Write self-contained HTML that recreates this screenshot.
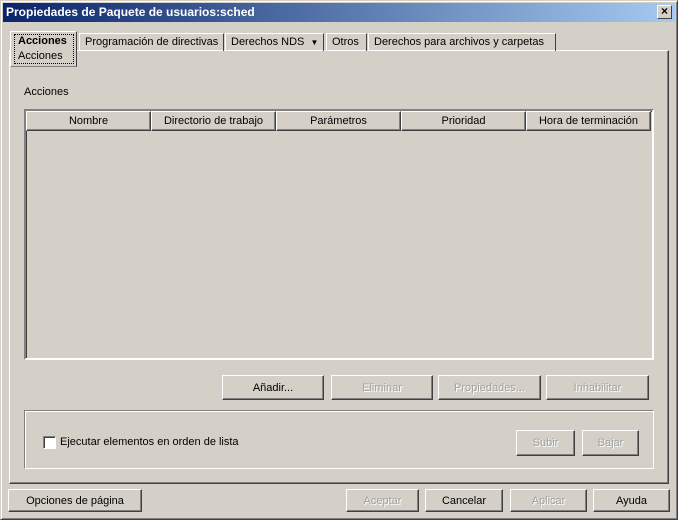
<!DOCTYPE html>
<html><head><meta charset="utf-8"><style>
*{margin:0;padding:0;box-sizing:border-box}
body{width:678px;height:520px;background:#d4d0c8;font-family:"Liberation Sans",sans-serif;font-size:11px;color:#000;position:relative;overflow:hidden}
.a{position:absolute}
.win{left:0;top:0;width:678px;height:520px;border:1px solid;border-color:#d4d0c8 #404040 #404040 #d4d0c8;box-shadow:inset 1px 1px #fff,inset -1px -1px #808080}
.title{left:3px;top:3px;width:672px;height:19px;background:linear-gradient(90deg,#0a246a,#a6caf0);color:#fff;font-weight:bold;font-size:12px;padding:2px 0 0 3px}
.close{left:657px;top:5px;width:15px;height:14px;background:#d4d0c8;border:1px solid;border-color:#fff #404040 #404040 #fff;font-size:12px;font-weight:bold;line-height:11px;text-align:center;color:#000}
.btn{position:absolute;border:1px solid;border-color:#fff #404040 #404040 #fff;box-shadow:inset -1px -1px #808080;text-align:center;display:flex;align-items:center;justify-content:center}
.dis{color:#a0a0a0;text-shadow:1px 1px #fff}
.tab{position:absolute;top:33px;height:18px;border:1px solid;border-color:#fff #404040 transparent #fff;border-bottom:none;padding:2px 0 0 5px}
.panel{left:9px;top:50px;width:660px;height:434px;border:1px solid;border-color:#fff #404040 #404040 #fff;box-shadow:inset -1px -1px #808080}
.hd{position:absolute;top:111px;height:20px;border:1px solid;border-color:#fff #404040 #404040 #fff;box-shadow:inset -1px -1px #808080;text-align:center;padding-top:3px}
</style></head><body>
<div class="a win"></div>
<div class="a title">Propiedades de Paquete de usuarios:sched</div>
<div class="a close">×</div>
<div class="a panel"></div>
<div class="tab" style="left:79px;width:145px">Programación de directivas</div>
<div class="tab" style="left:225px;width:99px">Derechos NDS &nbsp;<span style="font-size:8px">▼</span></div>
<div class="tab" style="left:326px;width:41px">Otros</div>
<div class="tab" style="left:368px;width:188px">Derechos para archivos y carpetas</div>
<div class="a" style="left:10px;top:31px;width:67px;height:36px;background:#d4d0c8;border:1px solid;border-color:#fff #404040 #808080 #fff"></div>
<div class="a" style="left:14px;top:34px;width:60px;height:30px;border:1px dotted #000"></div>
<div class="a" style="left:18px;top:35px;font-weight:bold">Acciones</div>
<div class="a" style="left:18px;top:50px">Acciones</div>
<div class="a" style="left:24px;top:86px">Acciones</div>
<div class="a" style="left:24px;top:109px;width:630px;height:251px;border:2px solid;border-color:#808080 #fff #fff #808080;box-shadow:inset 1px 1px #404040"></div>
<div class="hd" style="left:26px;width:125px">Nombre</div>
<div class="hd" style="left:151px;width:125px">Directorio de trabajo</div>
<div class="hd" style="left:276px;width:125px">Parámetros</div>
<div class="hd" style="left:401px;width:125px">Prioridad</div>
<div class="hd" style="left:526px;width:125px">Hora de terminación</div>
<div class="btn" style="left:222px;top:375px;width:102px;height:25px">Añadir...</div>
<div class="btn dis" style="left:331px;top:375px;width:102px;height:25px">Eliminar</div>
<div class="btn dis" style="left:438px;top:375px;width:103px;height:25px">Propiedades...</div>
<div class="btn dis" style="left:546px;top:375px;width:103px;height:25px">Inhabilitar</div>
<div class="a" style="left:24px;top:410px;width:630px;height:59px;border:1px solid;border-color:#808080 #fff #fff #808080;box-shadow:inset 1px 1px #fff,1px 1px #808080 inset"></div>
<div class="a" style="left:43px;top:436px;width:13px;height:13px;background:#fff;border:1px solid;border-color:#808080 #fff #fff #808080;box-shadow:inset 1px 1px #404040"></div>
<div class="a" style="left:60px;top:436px">Ejecutar elementos en orden de lista</div>
<div class="btn dis" style="left:516px;top:430px;width:59px;height:26px">Subir</div>
<div class="btn dis" style="left:582px;top:430px;width:57px;height:26px">Bajar</div>
<div class="btn" style="left:8px;top:489px;width:134px;height:23px">Opciones de página</div>
<div class="btn dis" style="left:346px;top:489px;width:73px;height:23px">Aceptar</div>
<div class="btn" style="left:425px;top:489px;width:78px;height:23px">Cancelar</div>
<div class="btn dis" style="left:510px;top:489px;width:77px;height:23px">Aplicar</div>
<div class="btn" style="left:593px;top:489px;width:77px;height:23px">Ayuda</div>
</body></html>
